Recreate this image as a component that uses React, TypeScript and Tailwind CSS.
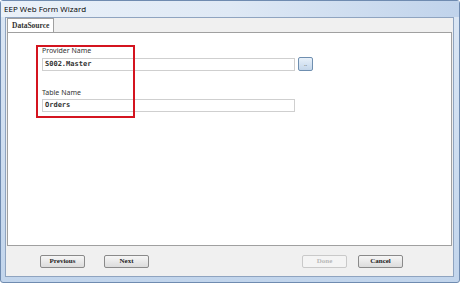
import React from 'react';

const WizardButton = ({ label, disabled }: { label: string; disabled?: boolean }) => (
  <button
    className={
      disabled
        ? 'w-[45px] h-[13px] rounded-[2px] border border-[#c9c9c9] bg-[#f4f4f4] text-[#b8b8b8] text-[7px] font-bold leading-none font-["Liberation_Serif",serif]'
        : 'w-[45px] h-[13px] rounded-[2px] border border-[#8a8a8a] bg-gradient-to-b from-[#f6f6f6] to-[#dcdcdc] text-[#222] text-[7px] font-bold leading-none font-["Liberation_Serif",serif]'
    }
  >
    {label}
  </button>
);

export default function App() {
  return (
    <div className="w-[461px] h-[285px] bg-white overflow-hidden">
      <div className="w-[460px] h-[283px] flex flex-col bg-gradient-to-b from-[#dce7f4] to-[#c2d5ec] border border-[#6f8bb0] rounded-[3px]">
        {/* title bar */}
        <div className="h-[16px] flex items-center pl-[3px] bg-gradient-to-r from-[#eaf1f9] via-[#dfe9f5] to-[#c0d3eb]">
          <span className="text-[8px] text-black font-['Open_Sans',sans-serif] leading-none">
            EEP Web Form Wizard
          </span>
        </div>
        {/* client area */}
        <div className="flex-1 flex flex-col ml-[4px] mr-[5px] mb-[5px] bg-[#f0f0f0] border border-[#8fa4c0]">
          {/* tabs */}
          <div className="h-[14px] flex items-end pl-[1px]">
            <div className="h-[14px] px-[4px] flex items-center bg-white border border-b-0 border-[#a0a0a0] text-[7.5px] font-bold font-['Liberation_Serif',serif] text-[#333]">
              DataSource
            </div>
          </div>
          <div className="h-[214px] mx-[1px] bg-white border border-[#a0a0a0] flex flex-col">
            <div className="relative pl-[34px] pt-[14px]">
              <div className="absolute left-[28px] top-[12px] w-[99px] h-[73px] border-2 border-[#d4141f]" />
              <div className="text-[7px] text-[#333] font-['Noto_Sans',sans-serif] leading-none">Provider Name</div>
              <div className="flex items-center gap-[3px] mt-[3px]">
                <div className="w-[253px] h-[13px] border border-[#cfcfcf] bg-white flex items-center px-[2px] text-[7px] font-bold font-['DejaVu_Sans_Mono',monospace] text-[#333]">
                  S002.Master
                </div>
                <div className="w-[15px] h-[14px] rounded-[2px] border border-[#6f8fb0] bg-gradient-to-b from-[#e8f1fa] to-[#c4d6ea] flex items-center justify-center text-[6px] text-[#666] leading-none">
                  ..
                </div>
              </div>
              <div className="mt-[18px] text-[7px] text-[#333] font-['Noto_Sans',sans-serif] leading-none">Table Name</div>
              <div className="mt-[3px] w-[253px] h-[13px] border border-[#cfcfcf] bg-white flex items-center px-[2px] text-[7px] font-bold font-['DejaVu_Sans_Mono',monospace] text-[#333]">
                Orders
              </div>
            </div>
          </div>
          {/* footer */}
          <div className="flex-1 flex items-center pl-[34px] pr-[50px]">
            <div className="flex gap-[19px]">
              <WizardButton label="Previous" />
              <WizardButton label="Next" />
            </div>
            <div className="flex-1" />
            <div className="flex gap-[11px]">
              <WizardButton label="Done" disabled />
              <WizardButton label="Cancel" />
            </div>
          </div>
        </div>
      </div>
    </div>
  );
}
